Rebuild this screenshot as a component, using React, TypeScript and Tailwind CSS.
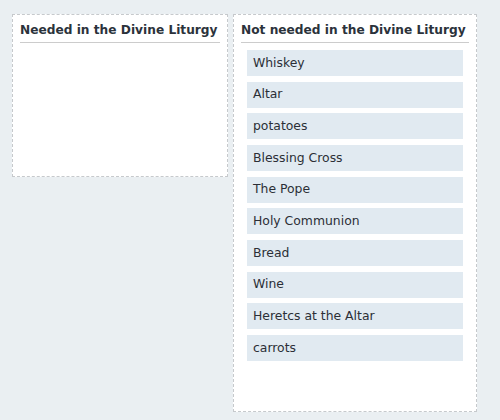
import React from "react";

const items = [
  "Whiskey",
  "Altar",
  "potatoes",
  "Blessing Cross",
  "The Pope",
  "Holy Communion",
  "Bread",
  "Wine",
  "Heretcs at the Altar",
  "carrots",
];

export default function App() {
  return (
    <div
      className="w-[500px] h-[420px] bg-[#eaeff2] flex items-start gap-[5px] pl-[12px] pt-[14px]"
      style={{ fontFamily: '"DejaVu Sans", Verdana, sans-serif' }}
    >
      <div className="w-[216px] h-[163px] bg-white border border-dashed border-[#c6c9cc] px-[7px]">
        <div className="pt-[6px] pb-[3px] border-b border-[#cccccc] text-[12.2px] leading-[18px] font-bold text-[#2b323b] whitespace-nowrap">
          Needed in the Divine Liturgy
        </div>
      </div>
      <div className="w-[244px] h-[398px] bg-white border border-dashed border-[#c6c9cc]">
        <div className="mx-[7px] pt-[6px] pb-[3px] border-b border-[#cccccc] text-[12.2px] leading-[18px] font-bold text-[#2b323b] whitespace-nowrap">
          Not needed in the Divine Liturgy
        </div>
        <div className="mx-[13px] mt-[7px] flex flex-col gap-[5.67px]">
          {items.map((it) => (
            <div
              key={it}
              className="h-[26px] bg-[#e1eaf1] pl-[6px] flex items-center text-[12.4px] text-[#2b2f36]"
            >
              {it}
            </div>
          ))}
        </div>
      </div>
    </div>
  );
}
